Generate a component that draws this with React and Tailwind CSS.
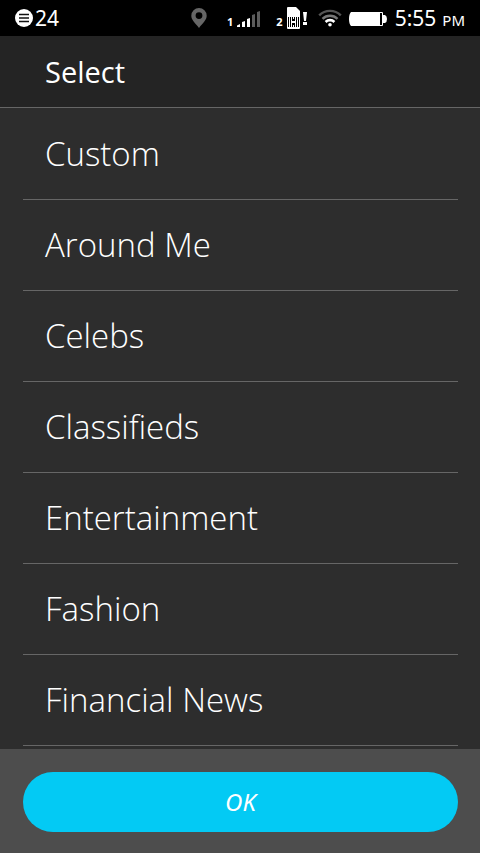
import React from "react";

const categories = [
  "Custom",
  "Around Me",
  "Celebs",
  "Classifieds",
  "Entertainment",
  "Fashion",
  "Financial News",
];

function NotificationIcon() {
  return (
    <svg width="18" height="18" viewBox="0 0 18 18" aria-hidden="true">
      <circle cx="9" cy="9" r="9" fill="#fff" />
      <path d="M4 5.500h10M4 9h10M4 12.500h10" stroke="#111" strokeWidth="1.500" />
    </svg>
  );
}

function PinIcon() {
  return (
    <svg width="16" height="20" viewBox="0 0 16 20" aria-hidden="true">
      <path
        fillRule="evenodd"
        d="M8 0a7.700 7.700 0 0 0-7.700 7.700C.3 12 4 14.500 8 20c4-5.500 7.700-8 7.700-12.300A7.700 7.700 0 0 0 8 0Zm0 4.200a3.400 3.400 0 1 1 0 6.800 3.400 3.400 0 0 1 0-6.800Z"
        fill="#666"
      />
    </svg>
  );
}

function SignalIcon() {
  return (
    <svg width="23" height="18" viewBox="0 0 23 18" aria-hidden="true">
      <path d="M0 16.500L3 15v3H0zM5 13l3-1v6H5zM10 10l3-1v9h-3z" fill="#fff" />
      <path d="M15 6l3-1v13h-3zM20 3l3-1v16h-3z" fill="#5c5c5c" />
    </svg>
  );
}

function SimIcon() {
  return (
    <svg width="20" height="22" viewBox="0 0 20 22" aria-hidden="true">
      <path d="M1 0h8l4 4v17a1 1 0 0 1-1 1H1a1 1 0 0 1-1-1V1a1 1 0 0 1 1-1Z" fill="#fff" />
      <path d="M1 10h11v10H1z" fill="#000" />
      <path d="M2 10h1v10H2zM4 10h1v10H4zM8 10h1v10H8zM10 10h1v10h-1zM5 14h3v2H5zM6 10h1v2H6zM6 18h1v2H6z" fill="#fff" />
      <path d="M16 5h4l-1 9h-2zM16 15h4v3h-4z" fill="#fff" />
    </svg>
  );
}

function WifiIcon() {
  return (
    <svg width="24" height="18" viewBox="0 0 24 18" fill="none" aria-hidden="true">
      <path d="M1.200 6.300a15.300 15.300 0 0 1 21.600 0" stroke="#555" strokeWidth="2.400" />
      <path d="M4.500 9.800a10.600 10.600 0 0 1 15 0" stroke="#777" strokeWidth="2.400" />
      <path d="M7.600 13a6.200 6.200 0 0 1 8.800 0" stroke="#fff" strokeWidth="2.600" />
      <circle cx="12" cy="15.700" r="1.800" fill="#fff" />
    </svg>
  );
}

function BatteryIcon() {
  return (
    <svg width="38" height="16" viewBox="0 0 38 16" aria-hidden="true">
      <path d="M2 2h31q1 0 1 1v2h2q2 1 2 4t-2 4h-2v2q0 1-1 1H2Q0 14 0 9t2-7Z" fill="#fff" />
      <path d="M31 3h2v12h-2z" fill="#000" />
    </svg>
  );
}

function StatusBar() {
  return (
    <div className="flex h-9 shrink-0 items-center justify-between bg-black px-[15px] text-white">
      <div className="flex items-center gap-[2px]">
        <NotificationIcon />
        <span className="text-[21px] leading-6">24</span>
      </div>
      <div className="flex items-center">
        <PinIcon />
        <div className="ml-5 flex items-end gap-1">
          <span className="text-[11px] leading-[10px] font-bold">1</span>
          <SignalIcon />
        </div>
        <div className="ml-4 flex items-end gap-1">
          <span className="text-[11px] leading-[14px] font-bold">2</span>
          <SimIcon />
        </div>
        <div className="ml-[11px]">
          <WifiIcon />
        </div>
        <div className="ml-[7px]">
          <BatteryIcon />
        </div>
        <div className="ml-2 flex items-baseline gap-[6px] pt-[2px] leading-6">
          <span className="text-[21px]">5:55</span>
          <span className="text-[15px]">PM</span>
        </div>
      </div>
    </div>
  );
}

export default function App() {
  return (
    <div className="flex h-screen flex-col bg-[#2d2d2d] font-['Noto_Sans','Open_Sans',sans-serif] text-white">
      <StatusBar />
      <header className="flex h-[72px] shrink-0 items-center border-b border-[#666] bg-[#242424] px-[45px]">
        <h1 className="font-['Open_Sans',sans-serif] text-[29px] leading-9 font-medium">Select</h1>
      </header>
      <ul className="min-h-0 flex-1 overflow-y-auto pt-px pr-[22px] pl-[23px]">
        {categories.map((name) => (
          <li key={name} className="border-b border-[#666]">
            <button
              type="button"
              className="flex h-[90px] w-full items-center px-[22px] text-left font-['Open_Sans',sans-serif] text-[33px] leading-10 font-light"
            >
              {name}
            </button>
          </li>
        ))}
      </ul>
      <footer className="shrink-0 bg-[#4d4d4d] pt-[23px] pr-[22px] pb-[21px] pl-[23px]">
        <button
          type="button"
          className="h-[60px] w-full rounded-full bg-[#03caf4] text-[24px] leading-8 italic"
        >
          OK
        </button>
      </footer>
    </div>
  );
}
